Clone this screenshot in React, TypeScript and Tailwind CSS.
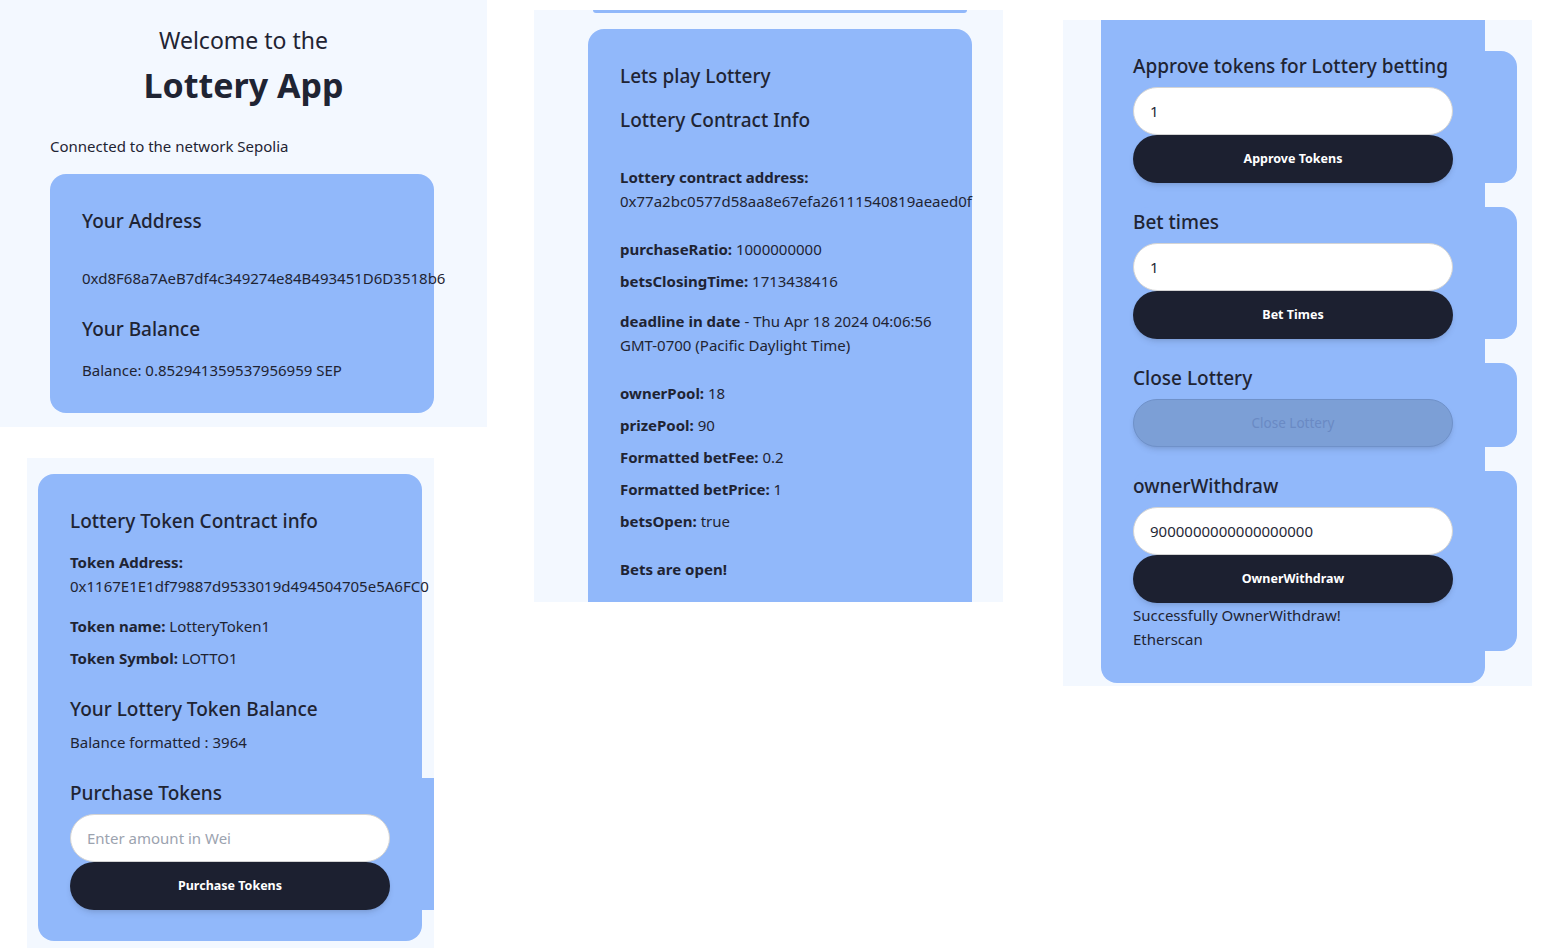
import React from "react";

const font = { fontFamily: '"Noto Sans", "Open Sans", sans-serif' };

const Field: React.FC<{ label: string; value: string }> = ({ label, value }) => (
  <p className="leading-6">
    <span className="font-bold">{label}</span> {value}
  </p>
);

const PillInput: React.FC<{ value?: string; placeholder?: string }> = ({ value, placeholder }) => (
  <input
    readOnly
    defaultValue={value}
    placeholder={placeholder}
    className="block h-12 w-[320px] rounded-full border border-[#d4d4d4] bg-white px-4 text-[15px] text-[#1f2937] placeholder:text-[#9ca3af] outline-none"
  />
);

const PillButton: React.FC<{ label: string; disabled?: boolean }> = ({ label, disabled }) =>
  disabled ? (
    <button
      disabled
      className="block h-12 w-[320px] rounded-full border border-[#6f91c9] bg-[#7c9fd6] text-[13.5px] text-[#6a8ac4] shadow-md"
    >
      {label}
    </button>
  ) : (
    <button className="block h-12 w-[320px] rounded-full bg-[#1c2030] pt-px text-[12.5px] font-bold text-white shadow-md">
      {label}
    </button>
  );

export default function App() {
  return (
    <div style={font} className="flex min-h-[948px] items-start bg-white text-[15px] text-[#1f2433]">
      {/* left column */}
      <div className="flex w-[487px] flex-col">
        <div className="h-[427px] bg-[#f3f8ff] pt-6">
          <h2 className="text-center text-[23px] leading-8">Welcome to the</h2>
          <h1 className="mt-[9px] text-center text-[34px] font-bold leading-10">Lottery App</h1>
          <p className="ml-[50px] mt-[30px] leading-[22px]">Connected to the network Sepolia</p>
          <div className="ml-[50px] mt-[17px] w-[384px] rounded-2xl bg-[#91b8fa] px-8 pb-[33px] pt-[33px]">
            <h3 className="text-[19px] font-medium leading-7">Your Address</h3>
            <p className="mt-[33px] whitespace-nowrap leading-5">0xd8F68a7AeB7df4c349274e84B493451D6D3518b6</p>
            <h3 className="mt-[27px] text-[19px] font-medium leading-7">Your Balance</h3>
            <p className="mt-[17px] leading-5">Balance: 0.852941359537956959 SEP</p>
          </div>
        </div>

        <div className="ml-[27px] mt-[31px] h-[490px] w-[407px] bg-[#f3f8ff] pt-4">
          <div className="ml-[11px] w-[384px] rounded-2xl bg-[#91b8fa] pb-[31px] pl-8 pt-[33px]">
            <h3 className="text-[19px] font-medium leading-7">Lottery Token Contract info</h3>
            <div className="mt-[15px]">
              <p className="font-bold leading-6">Token Address:</p>
              <p className="whitespace-nowrap leading-6">0x1167E1E1df79887d9533019d494504705e5A6FC0</p>
            </div>
            <div className="mt-4 flex flex-col gap-2">
              <Field label="Token name:" value="LotteryToken1" />
              <Field label="Token Symbol:" value="LOTTO1" />
            </div>
            <h3 className="mt-[25px] text-[19px] font-medium leading-7">Your Lottery Token Balance</h3>
            <p className="mt-[7px] leading-6">Balance formatted : 3964</p>
            <div className="mt-6 w-[364px] bg-[#91b8fa]">
              <h3 className="pt-px text-[19px] font-medium leading-7">Purchase Tokens</h3>
              <div className="mt-[7px]">
                <PillInput placeholder="Enter amount in Wei" />
                <PillButton label="Purchase Tokens" />
              </div>
            </div>
          </div>
        </div>
      </div>

      {/* middle column */}
      <div className="ml-[47px] mt-[10px] h-[592px] w-[469px] overflow-hidden bg-[#f3f8ff]">
        <div className="ml-[59px] h-[3px] w-[374px] rounded-b-lg bg-[#91b8fa]" />
        <div className="ml-[54px] mt-4 h-[600px] w-[384px] rounded-t-2xl bg-[#91b8fa] pl-8 pt-[33px]">
          <h3 className="text-[19px] font-medium leading-7">Lets play Lottery</h3>
          <h3 className="mt-4 text-[19px] font-medium leading-7">Lottery Contract Info</h3>
          <div className="mt-[31px]">
            <p className="font-bold leading-6">Lottery contract address:</p>
            <p className="whitespace-nowrap leading-6">0x77a2bc0577d58aa8e67efa26111540819aeaed0f</p>
          </div>
          <div className="mt-6 flex flex-col gap-2">
            <Field label="purchaseRatio:" value="1000000000" />
            <Field label="betsClosingTime:" value="1713438416" />
          </div>
          <p className="mt-4 w-[320px] leading-6">
            <span className="font-bold">deadline in date</span> - Thu Apr 18 2024 04:06:56 GMT-0700 (Pacific
            Daylight Time)
          </p>
          <div className="mt-6 flex flex-col gap-2">
            <Field label="ownerPool:" value="18" />
            <Field label="prizePool:" value="90" />
            <Field label="Formatted betFee:" value="0.2" />
            <Field label="Formatted betPrice:" value="1" />
            <Field label="betsOpen:" value="true" />
          </div>
          <p className="mt-6 font-bold leading-6">Bets are open!</p>
        </div>
      </div>

      {/* right column */}
      <div className="ml-[60px] mt-5 w-[469px] bg-[#f3f8ff] pb-[3px]">
        <div className="ml-[38px] w-[384px] rounded-b-2xl bg-[#91b8fa] pb-8 pl-8 pt-[31px]">
          <div className="flex flex-col gap-6">
            <section className="w-[384px] rounded-2xl bg-[#91b8fa] pt-px">
              <h3 className="text-[19px] font-medium leading-7">Approve tokens for Lottery betting</h3>
              <div className="mt-[7px]">
                <PillInput value="1" />
                <PillButton label="Approve Tokens" />
              </div>
            </section>
            <section className="w-[384px] rounded-2xl bg-[#91b8fa] pt-px">
              <h3 className="text-[19px] font-medium leading-7">Bet times</h3>
              <div className="mt-[7px]">
                <PillInput value="1" />
                <PillButton label="Bet Times" />
              </div>
            </section>
            <section className="w-[384px] rounded-2xl bg-[#91b8fa] pt-px">
              <h3 className="text-[19px] font-medium leading-7">Close Lottery</h3>
              <div className="mt-[7px]">
                <PillButton label="Close Lottery" disabled />
              </div>
            </section>
            <section className="w-[384px] rounded-2xl bg-[#91b8fa] pt-px">
              <h3 className="text-[19px] font-medium leading-7">ownerWithdraw</h3>
              <div className="mt-[7px]">
                <PillInput value="9000000000000000000" />
                <PillButton label="OwnerWithdraw" />
              </div>
              <p className="leading-6">Successfully OwnerWithdraw!</p>
              <p className="leading-6">Etherscan</p>
            </section>
          </div>
        </div>
      </div>
    </div>
  );
}
